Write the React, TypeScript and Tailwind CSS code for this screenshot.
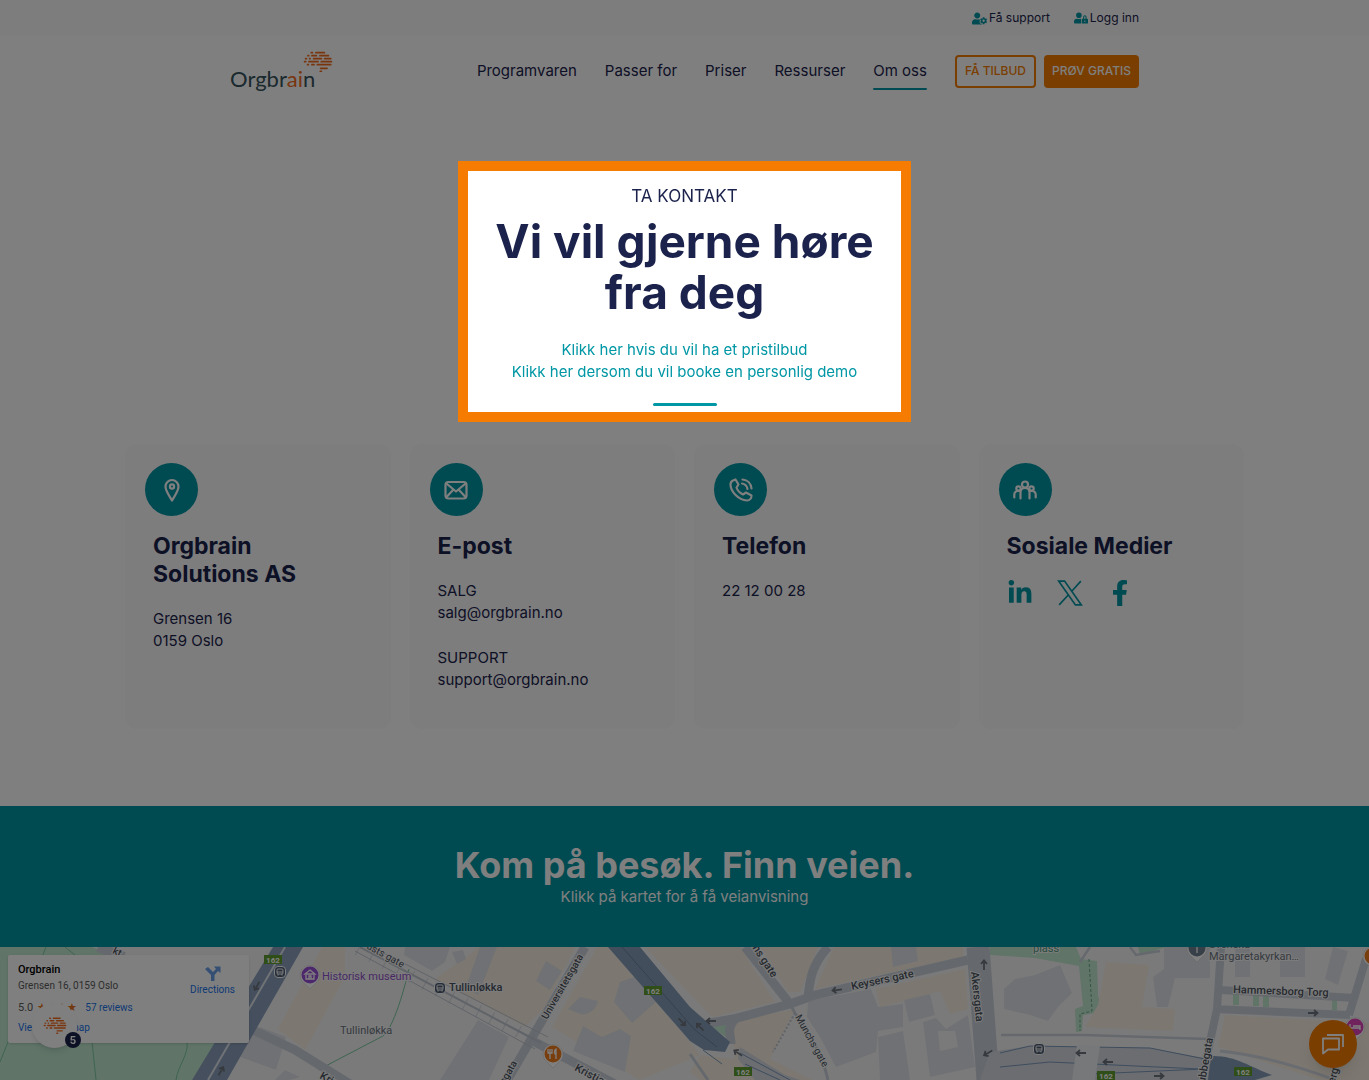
import React from "react";
import { FaUserCog, FaUserLock, FaLinkedinIn, FaFacebookF } from "react-icons/fa";

const DASHES: [number, number, number][] = [
  [1, 20, 27], [1, 34, 63],
  [10, 10, 16], [10, 22, 39], [10, 46, 75],
  [19, 3, 9], [19, 15, 20], [19, 27, 54], [19, 60, 82],
  [28, 0, 7], [28, 13, 44], [28, 50, 84],
  [37, 9, 15], [37, 22, 32], [37, 38, 82],
  [48, 48, 71],
  [57, 47, 54],
];

function Brain({ className }: { className: string }) {
  return (
    <svg viewBox="-3 -2 90 64" className={className} aria-hidden="true">
      {DASHES.map(([y, a, b]) => (
        <path key={`${y}-${a}`} d={`M${a + 2} ${y + 2}H${b - 2}`} stroke="#f26a1b" strokeWidth="5.5" strokeLinecap="round" />
      ))}
    </svg>
  );
}

const NAV = ["Programvaren", "Passer for", "Priser", "Ressurser"];

function Header() {
  return (
    <header>
      <div className="bg-[#fafafa]">
        <div className="mx-auto flex h-9 max-w-[909px] items-center justify-end gap-6 text-xs">
          <a href="#support" className="flex items-center gap-0.5"><FaUserCog className="size-[15px] text-[#0097a5]" />Få support</a>
          <a href="#login" className="flex items-center gap-0.5"><FaUserLock className="size-[14px] text-[#0097a5]" />Logg inn</a>
        </div>
      </div>
      <div className="mx-auto flex h-[70px] max-w-[909px] items-center justify-between">
        <a href="#home" aria-label="Orgbrain" className="relative block pt-4 font-['Lato'] text-[22px] leading-6 text-[#37545c]">
          Orgbr<span className="text-[#f26a1b]">ai</span>n
          <Brain className="absolute top-0 left-[73px] w-[30px]" />
        </a>
        <nav className="flex items-center gap-7 text-[15px]">
          {NAV.map((n) => <a key={n} href="#nav" className="py-1">{n}</a>)}
          <a href="#om" className="relative py-1">Om oss<span className="absolute inset-x-0 -bottom-1 h-0.5 rounded bg-[#0097a5]" /></a>
          <div className="flex gap-2 text-xs font-medium">
            <button className="h-[33px] rounded border-2 border-[#f57c00] px-2 text-[#f57c00]">FÅ TILBUD</button>
            <button className="h-[33px] rounded bg-[#f57c00] px-2 text-white">PRØV GRATIS</button>
          </div>
        </nav>
      </div>
    </header>
  );
}

function Hero() {
  return (
    <section className="relative z-50 mx-auto mt-[55px] w-full max-w-[453px] border-[10px] border-[#f57c00] bg-white pt-[13px] pb-1.5 text-center shadow-[0_0_0_9999px_rgba(0,0,0,0.5)]">
      <p className="text-[17px] leading-6">TA KONTAKT</p>
      <h1 className="mt-2 text-[46px] leading-[51px] font-bold">Vi vil gjerne høre<br />fra deg</h1>
      <div className="mt-[21px] flex flex-col text-[15px] leading-[22px] text-[#0097a5]">
        <a href="#pris">Klikk her hvis du vil ha et pristilbud</a>
        <a href="#demo">Klikk her dersom du vil booke en personlig demo</a>
      </div>
      <div className="mx-auto mt-5 h-[3px] w-16 rounded bg-[#0097a5]" />
    </section>
  );
}

function Glyph({ children }: { children: React.ReactNode }) {
  return (
    <span className="flex size-[53px] items-center justify-center rounded-full bg-[#0095a3]">
      <svg viewBox="0 0 24 24" className="size-6" fill="none" stroke="#fff" strokeWidth="2.2" strokeLinecap="round" strokeLinejoin="round" aria-hidden="true">{children}</svg>
    </span>
  );
}

function Card({ icon, title, children }: { icon: React.ReactNode; title: React.ReactNode; children: React.ReactNode }) {
  return (
    <article className="rounded-xl bg-[#fafafa] px-5 pt-[19px] pb-[38px]">
      <Glyph>{icon}</Glyph>
      <div className="px-2 pt-4">
        <h2 className="text-[23px] leading-7 font-bold">{title}</h2>
        <div className="pt-5 text-[15px] leading-[22px]">{children}</div>
      </div>
    </article>
  );
}

function Cards() {
  return (
    <section className="mx-auto mt-[22px] grid w-full max-w-[1119px] grid-cols-4 gap-[19px]">
      <Card title={<>Orgbrain<br />Solutions AS</>} icon={<><path d="M12 22.500C9 17 5.500 13 5.500 8.500a6.500 6.500 0 0 1 13 0C18.500 13 15 17 12 22.500Z" /><circle cx="12" cy="8.500" r="2.100" /></>}>
        <p>Grensen 16<br />0159 Oslo</p>
      </Card>
      <Card title="E-post" icon={<><rect x="1.500" y="4" width="21" height="16.500" rx="3" /><path d="m3 6 9 7.500L21 6M3 18.500l6-6.500M21 18.500l-6-6.500" /></>}>
        <p>SALG</p><a href="mailto:salg@orgbrain.no">salg@orgbrain.no</a>
        <p className="pt-[23px]">SUPPORT</p><a href="mailto:support@orgbrain.no">support@orgbrain.no</a>
      </Card>
      <Card title="Telefon" icon={<><path d="M4 2.500 6.500 1.500 9.500 6.500 7.500 9.500C8.500 12.500 11 15 14 16.500L17 14.500 22.500 17.500C22.500 20 21 22.500 18 22.500 9 22 1.500 13 1.500 6.500 1.500 4.500 2.500 3.200 4 2.500Z" /><path d="M13.500 1.500c5 .5 8.500 4 9 9M13 5.500c3.200.5 5 2.500 5.500 5.500" /></>}>
        <a href="tel:22120028">22 12 00 28</a>
      </Card>
      <Card title="Sosiale Medier" icon={<><circle cx="12" cy="6.500" r="3" /><circle cx="5.500" cy="10.500" r="2.200" /><circle cx="18.500" cy="10.500" r="2.200" /><path d="M7.500 20.500v-6a4.500 4.500 0 0 1 9 0v6M1.300 19.500v-3A3.500 3.500 0 0 1 4.800 13H7M22.700 19.500v-3A3.500 3.500 0 0 0 19.200 13H17" /></>}>
        <div className="flex items-center gap-6 text-[#0095a3]">
          <a href="#linkedin" aria-label="LinkedIn"><FaLinkedinIn className="size-[26px]" /></a>
          <a href="#x" aria-label="X">
            <svg viewBox="0 0 24 24" className="size-[26px]" fill="none" stroke="currentColor" strokeWidth="1.500" aria-hidden="true"><path d="M1.500 1h5.500L22.500 23H17ZM22 1 13.400 10.600M10.400 13.800 2 23" /></svg>
          </a>
          <a href="#facebook" aria-label="Facebook"><FaFacebookF className="size-[26px]" /></a>
        </div>
      </Card>
    </section>
  );
}

function Shield({ x, y }: { x: number; y: number }) {
  return (
    <g>
      <rect x={x - 9} y={y - 5} width="18" height="9" fill="#5f9c30" />
      <text x={x} y={y + 3} fontSize="8" fontWeight="700" fill="#fff" textAnchor="middle">162</text>
    </g>
  );
}

function Arrow({ x, y, r }: { x: number; y: number; r: number }) {
  return <path transform={`translate(${x} ${y}) rotate(${r})`} d="M-5 0H4M1-3 4.500 0 1 3" fill="none" stroke="#6d747e" strokeWidth="1.800" />;
}

function Pin({ x, y, color, children }: { x: number; y: number; color: string; children: React.ReactNode }) {
  return (
    <g transform={`translate(${x} ${y})`}>
      <path d="M0 14-5 9A10 10 0 1 1 5 9Z" fill="#fff" stroke="#c8c8c8" strokeWidth=".5" />
      <circle r="8.500" fill={color} />
      <g stroke="#fff" fill="none" strokeWidth="1.300">{children}</g>
    </g>
  );
}

function Transit({ x, y }: { x: number; y: number }) {
  return (
    <g transform={`translate(${x} ${y})`}>
      <rect x="-5.500" y="-5.500" width="11" height="11" rx="3.500" fill="#4a5b70" stroke="#fff" />
      <rect x="-3" y="-3" width="6" height="5" rx="1" fill="none" stroke="#fff" />
      <path d="M-3 0H3M-2 3.500V2M2 3.500V2" stroke="#fff" />
    </g>
  );
}

function MapArt() {
  return (
    <svg viewBox="0 0 1369 133" preserveAspectRatio="xMidYMin slice" className="block h-full w-full font-['Roboto']" role="img" aria-label="Kart">
      <rect width="1369" height="133" fill="#f5f5f6" />
      <g fill="#c0e8d0">
        <path d="M0 0H92L112 8 245 14 250 50 192 133H0Z" />
        <path d="M712 80 727 76 726 90Z" />
        <path d="M990 0H1076L1081 12 1097 14 1098 48 1102 65 1083 68 1082 84 1076 85 1075 62 1083 59 1079 19 1035 11 990 8Z" />
        <path d="M1138 0H1166L1140 8ZM1233 45h6v13h-6ZM1253 45h6v14h-6ZM1263 46h6v14h-6ZM1332 49h5v14h-5Z" />
      </g>
      <g stroke="#7cc8a4" fill="none" strokeWidth="1">
        <path d="M46 0 0 115M92 94 96 133M187 94C189 108 178 118 176 133M65 0 90 20M409 22C400 60 389 88 381 90L318 123" />
      </g>
      <g fill="#f8efe2">
        <path d="M322 0 278 82 305 103 345 30 345 0ZM480 0H575L545 60 525 80 435 32Z" />
        <path d="M597 0H608L690 95 700 108 640 133 585 100 552 80Z" />
        <path d="M645 0H740L775 55 712 70ZM760 0H818L800 45 788 45ZM834 0H963V10L815 42Z" />
        <path d="M730 75 795 62 770 112 812 133H700L690 125 700 108 735 112ZM876 42 965 22 968 62 950 67 940 44 880 60Z" />
        <path d="M1106 15 1149 18 1142 60 1175 62 1173 84 1085 80 1098 58ZM1225 68 1369 76V133H1320L1218 100Z" />
      </g>
      <g fill="#e1e3e8">
        <path d="M405 0 450 0 445 15 432 24 404 8ZM452 5 463 3 466 12 457 17ZM480 0H497L478 48 466 40Z" />
        <path d="M580 50 598 54A16 16 0 0 1 580 67L568 62ZM546 14 562 24 550 43 536 34ZM620 35 640 28 656 55 632 76 614 55ZM478 73 509 90 489 133H440ZM583 79 602 90 620 82 631 89 625 125 573 104Z" />
        <path d="M260 80 286 90 276 123 235 108ZM285 123 300 130 290 133H275ZM808 54 871 42 878 60 903 57V80L878 84 876 105 836 120 820 90 807 70Z" />
        <path d="M891 0H916L918 14 893 20ZM904 53 930 47 935 68 909 75ZM923 75 936 71 946 82 968 68 975 120 930 130ZM878 90 903 84 910 133H880Z" />
        <path d="M1004 42 1015 32 1035 28 1060 18 1072 46 1058 60 1048 74 1030 68 1004 62ZM1153 30 1164 22V0H1210V31H1175L1168 60H1157ZM1235 0H1250V30H1235ZM1280 0H1305V30H1280ZM1333 0 1348 4 1338 38 1325 32Z" />
      </g>
      <path d="M938 84H955L958 100 940 104Z" fill="#f5f5f6" />
      <g fill="none" stroke="#cbd1da">
        <path d="M98 0 124 10" strokeWidth="10" />
        <path d="M253 83 295 103 350 137M585 0 505 137M531 93 615 137" strokeWidth="9" />
        <path d="M710 76 733 72 790 57 815 48 968 13M745 0 790 57M828 0C810 20 810 35 808 50M735 72C726 82 731 88 731 97" strokeWidth="9" />
        <path d="M790 57 795 66 822 110 828 133M690 107 708 133" strokeWidth="3" />
        <path d="M978 0 988 133" strokeWidth="23" />
        <path d="M1221 0 1217 62 1201 137M1221 43 1355 51M1215 62 1350 68M1366 12 1349 68" strokeWidth="8" />
        <path d="M1001 88H1085L1208 92M1090 0 1080 15M1130 0 1136 8 1160 4" strokeWidth="2.500" />
      </g>
      <path d="M990 105 1030 99 1150 101 1210 112V133H980ZM740 100 785 128 800 133H755L738 112Z" fill="#d6dbe3" />
      <path d="M1000 120 1050 115 1200 122M1000 106 1030 99 1150 101 1205 112M1090 127 1205 122M740 106 790 133M745 117 780 133M703 103 722 117" fill="none" stroke="#7d9abc" />
      <path d="M1077 98 1100 99 1095 133H1072Z" fill="#eef0f3" />
      <path d="M1211 109C1235 108 1250 120 1272 128L1255 133H1208Z" fill="#879db9" />
      <path d="M1220 104C1260 108 1300 120 1335 133" fill="none" stroke="#d3d8e0" strokeWidth="3" />
      <path d="M273 0H303L227 133H192Z" fill="#8a9fbb" />
      <path d="M285 0 208 133" stroke="#e0e5ec" strokeWidth="2" />
      <path d="M608 0H640L690 60 730 95 725 105 704 103 690 94Z" fill="#879db9" />
      <path d="M622 0 695 83 717 100" fill="none" stroke="#6b809a" />
      <g fill="none" stroke="#c0c6d0">
        <path d="M360 0 541 96" strokeWidth="2" />
        <path d="M355 4 535 102M372 0 548 90" strokeWidth="1" />
        <path d="M358 2 542 97" strokeWidth="13" strokeDasharray="1 14" strokeOpacity=".6" />
        <path d="M795 66 773 105" strokeDasharray="2 2" strokeWidth="2" />
        <path d="M1089 12 1092 64 1080 67V84" stroke="#6aa98a" strokeDasharray="3 2" />
      </g>
      <Arrow x={257} y={39} r={120} /><Arrow x={221} y={124} r={-60} /><Arrow x={682} y={75} r={48} />
      <Arrow x={700} y={80} r={225} /><Arrow x={711} y={74} r={180} /><Arrow x={738} y={106} r={215} />
      <Arrow x={837} y={43} r={172} /><Arrow x={984} y={18} r={-90} /><Arrow x={988} y={106} r={150} />
      <Arrow x={1081} y={106} r={180} /><Arrow x={1108} y={115} r={180} /><Arrow x={1159} y={129} r={0} /><Arrow x={1313} y={66} r={0} />
      <Shield x={273} y={13} /><Shield x={653} y={44} /><Shield x={743} y={125} /><Shield x={1106} y={129} /><Shield x={1243} y={125} />
      <Transit x={280} y={25} /><Transit x={440} y={41} /><Transit x={1039} y={102} />
      <Pin x={310} y={28} color="#9b4fd6"><path d="M-5-1 0-5 5-1ZM-4 0V4H4V0M-1 4V1H1V4" /></Pin>
      <Pin x={553} y={107} color="#f07d1c"><path d="M-3-5V5M-5-5V-1H-1V-5M3 5V-5C1-4 1 0 3 1" /></Pin>
      <Pin x={1197} y={1} color="#6f7f90"><path d="M0-5V5M-3-2H3" /></Pin>
      <Pin x={1373} y={9} color="#f07d1c"><path d="M-3-4V4" /></Pin>
      <Pin x={1355} y={80} color="#e044b8"><path d="M-5-3V3M-5 1H5V3M-2-1H5V1" /></Pin>
      <g fontSize="11" fontWeight="500" fill="#4c5460" stroke="#f8f8f8" strokeWidth="2" paintOrder="stroke">
        <text x="322" y="33" fill="#9050c8" fontWeight="400">Historisk museum</text>
        <text x="449" y="44">Tullinløkka</text>
        <text x="340" y="87" fontWeight="400" fill="#6c7480">Tullinløkka</text>
        <text transform="translate(366 1) rotate(29)" fontSize="10" fontWeight="400">usts gate</text>
        <text transform="translate(112 6) rotate(25)" fontSize="10">kt</text>
        <text transform="translate(547 73) rotate(-60)" fontSize="10">Universitetsgata</text>
        <text transform="translate(499 148) rotate(-60)" fontSize="10">tetsgata</text>
        <text transform="translate(319 131) rotate(28)">Kristian</text>
        <text transform="translate(574 123) rotate(28)">Kristian</text>
        <text transform="translate(749 -4) rotate(57)">chs gate</text>
        <text transform="translate(795 70) rotate(61)" fontSize="10" fontWeight="400">Munchs gate</text>
        <text transform="translate(852 43) rotate(-12)">Keysers gate</text>
        <text transform="translate(971 25) rotate(84)">Akersgata</text>
        <text x="1233" y="46" transform="rotate(2 1233 46)">Hammersborg Torg</text>
        <text x="1209" y="1" fontWeight="400" fill="#6c7480">Svenska</text>
        <text x="1209" y="13" fontWeight="400" fill="#6c7480">Margaretakyrkan…</text>
        <text x="1033" y="5" fontWeight="400" fill="#4f9a78">plass</text>
        <text transform="translate(1203 148) rotate(-80)">Grubbegata</text>
        <text transform="translate(1333 143) rotate(-75)">berg</text>
      </g>
    </svg>
  );
}

function PlaceCard() {
  return (
    <aside className="absolute top-2 left-2 flex w-[241px] justify-between rounded-xs bg-white px-2.5 py-2 font-['Roboto'] text-[10px] leading-[14px] shadow">
      <div className="text-[#5b5b5b]">
        <h3 className="text-[11px] font-medium text-black">Orgbrain</h3>
        <p className="pt-0.5">Grensen 16, 0159 Oslo</p>
        <p className="flex items-center gap-1 pt-2 text-[11px] leading-[14px]">
          5.0 <span className="text-[#e7711b]">★★★★</span>
          <a href="#reviews" className="pl-1 text-[10px] text-[#1a73e8]">57 reviews</a>
        </p>
        <a href="#larger" className="block pt-1.5 text-[#1a73e8]">View larger map</a>
      </div>
      <a href="#directions" className="flex flex-col items-center gap-0.5 px-1 pt-0.5 text-[#1a73e8]">
        <svg viewBox="0 0 16 16" className="size-4" aria-hidden="true">
          <path d="M6 16V10L0 4 3 2 8 7 11 4 9 1.500H15.500V8L13 6 9.500 10V16Z" fill="#6a9fe8" />
        </svg>
        Directions
      </a>
    </aside>
  );
}

export default function App() {
  return (
    <div className="relative flex min-h-screen flex-col overflow-hidden bg-white font-['Inter',sans-serif] text-[#1b224c]">
      <Header />
      <Hero />
      <Cards />
      <section className="mt-[77px] bg-[#0095a3] py-[39px] text-center text-white">
        <h2 className="text-4xl leading-[41px] font-bold">Kom på besøk. Finn veien.</h2>
        <p className="text-[15px] leading-[22px]">Klikk på kartet for å få veianvisning</p>
      </section>
      <section className="relative h-0 min-h-[133px] grow overflow-hidden">
        <MapArt />
        <PlaceCard />
      </section>
      <button aria-label="Anmeldelser" className="fixed bottom-8 left-8 flex size-[45px] items-center justify-center rounded-full bg-white shadow-md">
        <Brain className="w-6" />
        <span className="absolute -right-1 bottom-0 flex size-4 items-center justify-center rounded-full bg-[#1b224c] text-[10px] font-bold text-white">5</span>
      </button>
      <button aria-label="Chat" className="fixed right-3 bottom-3 flex size-12 items-center justify-center rounded-full bg-[#f57c00] shadow-lg">
        <svg viewBox="0 0 24 24" className="size-6" fill="none" stroke="#fff" strokeWidth="1.800" strokeLinejoin="round" aria-hidden="true">
          <path d="M2 6.500H18V17.500H7L2 21.500ZM6 3H22V15" />
        </svg>
      </button>
    </div>
  );
}
